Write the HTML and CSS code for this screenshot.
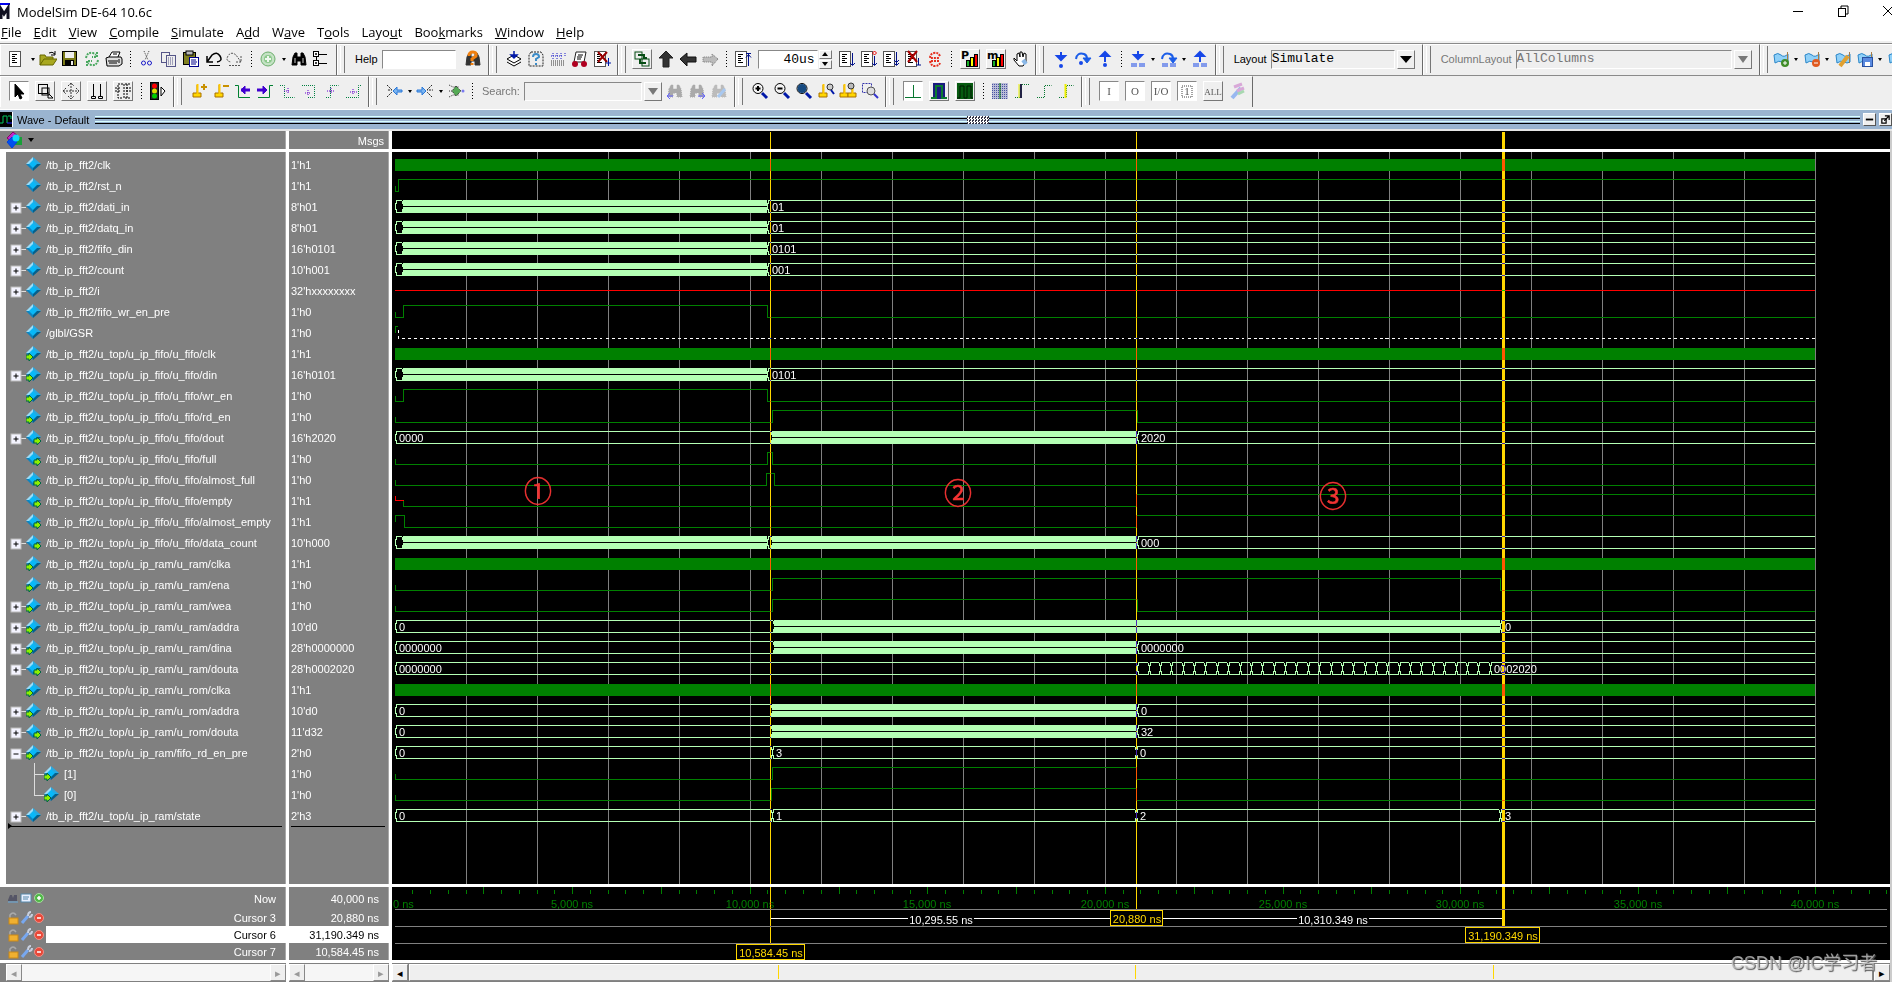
FILE: index.html
```html
<!DOCTYPE html>
<html lang="en">
<head>
<meta charset="utf-8">
<title>ModelSim DE-64 10.6c</title>
<link rel="stylesheet" href="styles.css">
</head>
<body>
<div class="app">
  <header class="titlebar">
    <span class="app-icon" data-icon="app"></span>
    <h1 class="app-title">ModelSim DE-64 10.6c</h1>
    <div class="window-buttons">
      <button aria-label="Minimize" data-icon="winmin"></button>
      <button aria-label="Restore" data-icon="winmax"></button>
      <button aria-label="Close" data-icon="winclose"></button>
    </div>
  </header>
  <nav class="menu">
    <button><u>F</u>ile</button><button><u>E</u>dit</button><button><u>V</u>iew</button><button><u>C</u>ompile</button><button><u>S</u>imulate</button><button>A<u>d</u>d</button><button>W<u>a</u>ve</button><button>T<u>o</u>ols</button><button>Layo<u>u</u>t</button><button>Boo<u>k</u>marks</button><button><u>W</u>indow</button><button><u>H</u>elp</button>
  </nav>

  <div class="toolbar-row">
    <div class="group first" data-tools="new > open save reload print | cut copy paste undo redo | add > find tree"></div>
    <div class="group">
      <label class="tool-label" for="help">Help</label>
      <input class="field help-field" id="help" type="text">
      <span class="tools" data-tools="helpfind"></span>
    </div>
    <div class="group" data-tools="compile compileall simulate break stopdoc"></div>
    <div class="group run-group">
      <span class="tools" data-tools="link* up left rightdim | restart"></span>
      <input class="field time-field" type="text" value="40us" aria-label="Run length">
      <span class="spinner"><button aria-label="Increase"><i class="tri-up"></i></button><button aria-label="Decrease"><i class="tri-down"></i></button></span>
      <span class="tools" data-tools="run runcont runall breakx stop | perf* mem* hand"></span>
    </div>
    <div class="group" data-tools="stepin stepover stepout | stepinl > stepoverl > stepoutl"></div>
    <div class="group layout-group">
      <label class="tool-label" for="layout">Layout</label>
      <select class="field combo layout-combo" id="layout"><option>Simulate</option></select>
      <button class="drop" aria-label="Open layouts"><i class="tri-big"></i></button>
    </div>
    <div class="group layout-group">
      <label class="tool-label dim" for="columns">ColumnLayout</label>
      <select class="field combo column-combo" id="columns" disabled><option>AllColumns</option></select>
      <button class="drop" aria-label="Open column layouts" disabled><i class="tri-big dim-tri"></i></button>
    </div>
    <div class="group last" data-tools="bmadd > bmdel > bmedit bmsave > bmgo"></div>
  </div>
  <div class="toolbar-row">
    <div class="group first modes" data-tools="pointer^ zoomsel* pan* twocur* edit* | traffic"></div>
    <div class="group" data-tools="curadd curdel prevedge nextedge fallprev fallnext riseprev risenext"></div>
    <div class="group search-group">
      <span class="tools" data-tools="expin > expout > expall |"></span>
      <label class="tool-label dim" for="search">Search:</label>
      <input class="field search-field" id="search" type="text" disabled>
      <button class="drop" aria-label="Search history" disabled><i class="tri-big dim-tri"></i></button>
      <span class="tools" data-tools="findprev findnext findopt"></span>
    </div>
    <div class="group" data-tools="zoomin zoomout zoomfull zoomcur zoomcurs zoomrange"></div>
    <div class="group modes" data-tools="wave1^ wave2* wave3* | grid edgea edgeb edgec"></div>
    <div class="group modes" data-tools="f1^ f2^ f3^ f4^ f5* brush"></div>
    <div class="filler"></div>
  </div>

  <div class="pane-title">
    <span class="pane-icon" data-icon="pane"></span>
    <h2>Wave - Default</h2>
    <span class="rails"></span><span class="grip-dots"></span><span class="rails"></span>
    <button class="pane-button" aria-label="Minimize pane" data-icon="pmin"></button>
    <button class="pane-button" aria-label="Undock pane" data-icon="pdock"></button>
  </div>

  <main class="panes">
    <section class="column names">
      <div class="head"><button class="head-tool" aria-label="Object filter"><span data-icon="shapes"></span><i class="tri-down"></i></button></div>
      <ul class="body name-list" id="names"></ul>
      <div class="foot cursors" id="cursor-names"></div>
      <div class="scroll"><button aria-label="Scroll left">◂</button><span class="track"></span><button aria-label="Scroll right">▸</button></div>
    </section>
    <section class="column values">
      <div class="head">Msgs</div>
      <ul class="body value-list" id="values"></ul>
      <div class="foot cursors" id="cursor-values"></div>
      <div class="scroll"><button aria-label="Scroll left">◂</button><span class="track"></span><button aria-label="Scroll right">▸</button></div>
    </section>
    <section class="column waves">
      <svg class="head plot" id="wave-head"></svg>
      <svg class="body plot" id="wave-body"></svg>
      <svg class="foot plot" id="wave-foot"></svg>
      <div class="scroll active"><button aria-label="Scroll left">◂</button><span class="thumb"><svg id="wave-marks"></svg></span><button aria-label="Scroll right">▸</button></div>
    </section>
  </main>
  <div class="watermark">CSDN @IC学习者</div>
</div>
<script src="app.js"></script>
</body>
</html>
```

FILE: styles.css
```css
* { box-sizing: border-box; }
body { margin: 0; background: #efefef; }
.app {
  position: relative;
  display: flex;
  flex-direction: column;
  height: 100vh;
  min-height: 960px;
  overflow: hidden;
  font: 13px/16px "Open Sans", "Noto Sans", sans-serif;
  color: #000;
}
button { font: inherit; padding: 0; border: 0; background: none; color: inherit; }
svg { display: block; }

.titlebar { display: flex; align-items: center; height: 23px; background: #fff; }
.app-icon { width: 10px; height: 18px; overflow: hidden; }
.app-title { margin: 0 0 0 7px; font-size: 13px; font-weight: 400; line-height: 22px; flex: 1; white-space: nowrap; }
.window-buttons { display: flex; width: 103px; overflow: hidden; gap: 27px; align-self: flex-start; }
.window-buttons button { flex: none; width: 18px; height: 20px; }

.menu { display: flex; gap: 12px; padding-left: 1px; height: 20px; background: #fff; border-bottom: 2px solid #efefef; }
.menu button { line-height: 19px; height: 19px; }

.toolbar-row { display: flex; height: 32px; border-top: 1px solid #8a8a8a; overflow: hidden; }
.group {
  position: relative;
  flex: none;
  display: flex;
  align-items: center;
  height: 31px;
  padding: 0 4px 2px 13px;
  border-right: 1px solid #6a6a6a;
  border-left: 1px solid #fff;
  border-top: 1px solid #fff;
  background: #efefef;
}
.group.first { padding-left: 5px; }
.group:not(.first)::before {
  content: "";
  position: absolute;
  left: 2px; top: 1px; bottom: 2px;
  width: 3px;
  border-left: 1px solid #fff;
  border-right: 1px solid #777;
}
.group.last, .filler { flex: 1 0 0; border-right: 0; overflow: hidden; }
.group.last { padding-left: 9px; }
.tools { display: flex; align-items: center; }
.tool { flex: none; width: 22px; height: 22px; display: grid; place-items: center; }
.tool.raised, .tool.pressed { width: 20px; height: 20px; margin: 0 3px; }
.tool.raised { border: 1px solid; border-color: #fff #777 #777 #fff; }
.tool.pressed { border: 1px solid; border-color: #888 #fff #fff #888; background: #fff; }
.sep { flex: none; width: 11px; height: 16px; background: repeating-linear-gradient(#000 0 1px, transparent 1px 3px) center / 1px 100% no-repeat; }
.more { flex: none; width: 9px; height: 20px; display: grid; place-items: center; }
.tool-label { font: 11px/16px "Liberation Sans", sans-serif; padding-left: 4px; margin-right: 4px; white-space: nowrap; }
.dim { color: #777; }
.field {
  height: 19px;
  margin: 0;
  padding: 0 2px;
  border: 1px solid;
  border-color: #888 #fff #fff #888;
  border-radius: 0;
  background: #fff;
  color: #000;
  font: 13px/16px "Liberation Mono", monospace;
  outline: 0;
}
.help-field { width: 74px; margin-right: 6px; }
.time-field { width: 60px; margin-left: 4px; text-align: right; }
.combo { appearance: none; padding: 0; background: #efefef; opacity: 1; }
.combo:disabled { color: #777; }
.layout-combo { width: 124px; }
.column-combo { width: 216px; }
.search-field { width: 118px; background: #efefef; }
.drop { width: 18px; height: 19px; margin: 0 2px; display: grid; place-items: center; border: 1px solid; border-color: #fff #777 #777 #fff; }
.layout-group { padding-right: 5px; }
.run-group { padding-left: 10px; padding-right: 4px; }
.spinner { display: flex; flex-direction: column; gap: 1px; width: 13px; margin: 0 4px 0 1px; }
.spinner button { height: 9px; display: grid; place-items: center; border: 1px solid; border-color: #fff #777 #777 #fff; }
.tri-up, .tri-down, .tri-big { width: 0; height: 0; border: 3px solid transparent; border-top-width: 0; border-bottom: 4px solid #000; }
.tri-down { border-top: 4px solid #000; border-bottom: 0; }
.more .tri-down { border-left-width: 2px; border-right-width: 2px; border-top-width: 3px; }
.tri-big { border: 6px solid transparent; border-top: 7px solid #000; border-bottom: 0; }
.dim-tri { border-width: 7px 5px 0; border-top-color: #777; }

.pane-title { display: flex; align-items: center; height: 22px; margin-top: 2px; background: #9ab4d0; border-top: 1px solid #fff; border-bottom: 2px solid #e6e6e6; }
.pane-title h2 { margin: 0 6px 0 4px; font: 11px/16px "Liberation Sans", sans-serif; white-space: nowrap; }
.pane-icon { width: 13px; height: 15px; overflow: hidden; }
.rails { flex: 1; height: 8px; border: solid #000; border-width: 0 0 1px; background: linear-gradient(#d8ffff 0 1px, transparent 1px 2px, #000 2px 3px, transparent 3px 5px, #d8ffff 5px 6px, transparent 6px); }
.grip-dots { width: 22px; height: 8px; background: repeating-conic-gradient(#fff 0 25%, #334 0 50%) 0 0 / 3px 3px; }
.pane-button { flex: none; width: 13px; height: 13px; margin-left: 3px; background: #efefef; border: 1px solid; border-color: #fff #555 #555 #fff; display: grid; place-items: center; }

.panes { flex: 1; display: grid; grid-template-columns: 289px 103px 1fr; min-height: 0; }
.column {
  display: grid;
  grid-template-rows: 21px 1fr 76px 19px;
  min-width: 0;
  min-height: 0;
  border-right: 3px solid #fff;
  background: #808080;
  font: 11px/21px "Liberation Sans", sans-serif;
  color: #fff;
}
.names, .values { box-shadow: inset -1px 0 #a8a8a8; }
.head { height: 21px; border-bottom: 3px solid #fff; line-height: 20px; }
.values .head { text-align: right; padding-right: 5px; }
.head-tool { display: flex; align-items: center; gap: 4px; height: 18px; padding-left: 6px; }
.body { margin: 0; padding: 2px 0 0; list-style: none; min-height: 0; overflow: hidden; border-bottom: 3px solid #fff; }
.name-list { border-left: 6px solid #fff; }
.name-row { display: flex; align-items: center; height: 21px; padding-left: 4px; }
.name-row.child { padding-left: 22px; }
.name-row svg { flex: none; }
.branch { width: 16px; height: 21px; }
.expander { display: block; width: 16px; height: 21px; }
.sig-name { padding: 1px 0 0 5px; white-space: nowrap; }
.value-row { height: 21px; padding-left: 2px; line-height: 22px; white-space: nowrap; }
.insert-line { position: relative; height: 1px; margin: 0 4px 0 2px; background: #000; }
.name-list .insert-line::before {
  content: "";
  position: absolute;
  left: 0; top: -3px;
  border: solid transparent;
  border-width: 3px 0 3px 4px;
  border-left-color: #000;
}
.foot { border-bottom: 3px solid #fff; overflow: hidden; }
.cursor-row { display: flex; align-items: center; height: 17px; line-height: 17px; }
.cursor-row:first-child { height: 22px; }
.cursor-tools { display: flex; flex: none; padding-left: 7px; width: 46px; }
.cursor-tools button { width: 13px; height: 16px; }
.cursor-text { flex: 1; padding: 1px 10px 0 0; line-height: 16px; text-align: right; white-space: nowrap; }
.cursor-row.selected .cursor-text { background: #fff; color: #000; }

.scroll { display: flex; height: 19px; padding-top: 1px; background: #808080; }
.names .scroll { padding-left: 6px; }
.scroll button { flex: none; width: 16px; height: 17px; background: #efefef; border: 1px solid; border-color: #fff #888 #888 #fff; color: #999; line-height: 14px; }
.scroll.active button { color: #000; }
.track { flex: 1; background: #f6f6f6; height: 17px; }
.thumb { flex: 1; height: 17px; margin: 0 1px; background: #efefef; border: 1px solid; border-color: #fff #888 #888 #fff; }
.thumb svg { width: 100%; height: 14px; }

.waves { border-right: 2px solid #ccc; background: #000; }
.plot { width: 100%; height: 100%; padding: 0; overflow: hidden; background: #000; shape-rendering: crispEdges; }
.plot text { font: 11px "Liberation Sans", sans-serif; fill: #fff; }
.plot .axis { fill: #008000; }
.plot .flag { fill: #ffd700; }
.plot .note { font: 28px "Noto Sans CJK SC", sans-serif; fill: #f33333; stroke: #f33333; stroke-width: 0.5px; }
.gridline { stroke: #808080; }
.sig { fill: none; stroke: #008000; }
.sig.unknown { stroke: #f00; }
.sig.hiz { stroke: #fff; stroke-dasharray: 3 3; }
.clock { fill: #008000; }
.bus { fill: none; stroke: #b4ffb4; }
.dense { fill: #b4ffb4; }
.cursor { fill: #ffd700; mix-blend-mode: difference; }

.watermark {
  position: absolute;
  right: 15px;
  bottom: 7px;
  font: 18px/24px "Liberation Sans", "Noto Sans CJK SC", sans-serif;
  color: rgba(200, 200, 200, 0.75);
  text-shadow: 1px 1px 1px #555;
}
```

FILE: app.js
```javascript
const P = (d, s = '#000', f = 'none', x = '') => `<path d="${d}" stroke="${s}" fill="${f}" ${x}/>`;
const R = (x, y, w, h, f, s = 'none') => `<rect x="${x}" y="${y}" width="${w}" height="${h}" fill="${f}" stroke="${s}"/>`;
const C = (x, y, r, f, s = 'none') => `<circle cx="${x}" cy="${y}" r="${r}" fill="${f}" stroke="${s}"/>`;
const DOT = 'stroke-dasharray="1 1"';
const W2 = 'stroke-width="2"';
const doc = x => R(1.5, 1.5, 11, 15, '#fff', '#555') + P('M4 4.5h5M4 6.5h3M4 8.5h5M4 10.5h3M4 12.5h5') + x;
const flag = P('M2 5q4-3 7 0t7-1v8q-3 2-6 0t-7 1z', '#2a86c8', '#8fd0f8') + P('M15.5 2v11', '#a67b45');
const binos = (c, x = '') => P('M3 7l2-4h2v4h4V3h2l2 4 1 8h-5v-4H7v4H2z', c, c, x);
const lens = x => C(7, 6.5, 5, '#f4f4f4', '#000') + P('M11 11l5 5', '#0018a8', 'none', 'stroke-width="3"') + x;
const base = (x, y = 0) => P(`M${x} 3v8h-4v4h8v-4h-4`, '#a87000', '#ffd700') + P(`M${x + .5} 2v10`, '#ffc800', 'none', W2);
const down = (y, h) => P(`M9 ${y}v${h}M5 ${y + h - 3}h8l-4 4z`, '#1747e8', '#1747e8', W2);
const upA = P('M9 12V5M5 6h8L9 2z', '#1747e8', '#1747e8', W2);
const over = P('M2 9q1-7 8-5q3 1 3 5', '#1b5de8', 'none', W2) + P('M9 8h8l-4 5z', '#1b5de8', '#1b5de8');
const bars = P('M3 13v4M5 13v4M13 13v4M15 13v4M7 13v4M11 13v4', '#1747e8');
const key = t => `<text x="9" y="13" font-family="Liberation Serif" font-size="11" text-anchor="middle" fill="#555">${t}</text>`;
const chart = t => `<text x="0" y="9" font-family="DejaVu Sans" font-size="11" font-weight="bold">${t}</text>` + R(5.5, 10.5, 3, 6, '#18b028', '#000') + R(9.5, 7.5, 3, 9, '#ff0', '#000') + R(13.5, 4.5, 3, 12, '#f00', '#000');
const icons = {
  app: R(0, 0, 10, 2, '#00e') + P('M1 16V6l3 5 4-6v11', '#112', 'none', 'stroke-width="3"'),
  winmin: P('M4 10.5h10'), winmax: R(4.5, 7.5, 7, 8, '#fff', '#000') + P('M7 7V5h7v8h-2'), winclose: P('M4 5l10 10M14 5L4 15'),
  new: doc(''),
  open: P('M1 15V5h5l1 2h7v2M1 15l4-6h13l-4 6z', '#660', '#a8a820') + P('M10 3q3-2 6 1M16 1v4h-4'),
  save: R(1.5, 1.5, 14, 14, '#7a7a18', '#000') + R(4, 2, 9, 6, '#eee') + R(4, 10, 9, 6, '#000') + R(10, 11, 2, 4, '#eee'),
  reload: P('M3 8q1-6 7-5l3 2M14 2v5H9M15 10q-1 6-7 5l-3-2M4 16v-5h5', '#4aa860', 'none', 'stroke-width="2" stroke-dasharray="2 1"'),
  print: P('M4 7l3-5h8l-2 5', '#000', '#fff') + P('M1 8l3-1h12l1 2v5l-3 2H2z', '#000', '#ddd') + P('M3 11h10M4 13h8M14 9v4M8 4h4'),
  cut: P('M6 1l4 9M11 1L7 10', '#444', 'none', DOT) + C(5.5, 13, 2, 'none', '#1818c8') + C(11.5, 13, 2, 'none', '#1818c8'),
  copy: R(1.5, 2.5, 8, 10, '#eee', '#558') + R(6.5, 5.5, 9, 11, '#eee', '#558') + P('M8 8h6M8 10h6M8 12h6M8 14h6', '#558', 'none', DOT),
  paste: R(1.5, 2.5, 12, 12, '#808020', '#000') + R(4, 1, 7, 4, '#bbb', '#000') + R(7.5, 7.5, 9, 9, '#fff', '#00008b') + P('M9 10h5M9 12h6M9 14h5', '#00008b'),
  undo: P('M3 6v6h6M3 12L8 5q5-4 8 1t-3 6', '#000', 'none', 'stroke-width="1.5"') + P('M5 15.5h11'),
  redo: P('M15 6v6H9M15 12L10 5Q5 1 2 6t3 6M3 15.5h11', '#555', 'none', 'stroke-dasharray="2 1"'),
  add: C(9, 9, 7, '#c4e2c4', '#6cae6c') + C(9, 9, 4, '#8cc88c') + P('M9 6v6M6 9h6', '#eef8ee', 'none', W2),
  find: binos('#000') + P('M5 8v5M13 8v5', '#ccc'),
  tree: R(1.5, 1.5, 5, 5, '#fff', '#000') + R(1.5, 10.5, 5, 5, '#fff', '#000') + P('M3 4h2M4 3v2M3 13h2M4 12v2M7 4.5h8M4.5 7v3M7 13.5h8'),
  helpfind: binos('#333') + P('M5 6q0-4 4-4t3 4l-4 3v2M8 13v2', '#f08010', 'none', 'stroke-width="3"'),
  compile: P('M2 9l7-4 7 4-7 4zM2 12l7 4 7-4', '#000', '#fff') + P('M9 1v6M6 5h6l-3 3z', '#0018a8', '#0018a8', 'stroke-width="1.5"'),
  compileall: P('M4 2h10l2 3v11H2V5z', '#222', '#eee', 'stroke-dasharray="2 1"') + P('M6 7q0-3 3-3t3 3l-3 2v2M9 13v2', '#3c8cc8', 'none', W2),
  simulate: P('M2 13h14M2 11h14M2 15h14', '#333', 'none', DOT) + P('M4 3v4M8 3v4M12 3v4M16 3v4M2 6h4M6 6h4M10 6h4M4 8v1M8 8v1M12 8v1', '#1818c8', 'none', DOT),
  break: P('M5 2h10l-2 10H3z', '#222', '#fff') + P('M7 5h5M6 7h5M6 9h4') + C(4, 14, 3, '#b00020') + C(13, 14, 3, '#b00020'),
  stopdoc: doc(P('M5 2l9 10M14 2L5 12', '#900', 'none', W2) + P('M15.5 8v8M13 13h5', '#0018a8')),
  link: R(2, 2, 7, 7, 'none', '#064d14') + R(9, 9, 7, 7, 'none', '#064d14') + P('M5 5h6v3h3M7 9v4h6', '#064d14', 'none', W2),
  up: P('M9 1l7 7h-4v9H6V8H2z', '#222', '#333'), left: P('M1 9l7-6v4h9v5H8v4z', '#111', '#333'),
  rightdim: P('M17 9l-6-5v3H2v5h9v4z', '#777', '#bbb', DOT),
  restart: doc(P('M14.5 3v13M12 3.5h5M12 7.500l2.500-3 2.500 3', '#00108b')),
  run: doc(P('M14.5 3v12M12 13l2.500 2.500 2.500-2.500', '#00108b')), runcont: doc(P('M14.5 6v9M12 13l2.500 2.500 2.500-2.500', '#00108b') + P('M14.500 1l2 2-2 2-2-2z', '#e00')),
  runall: doc(P('M14.5 2v13M12 10l2.500 2.500 2.500-2.500M12 13l2.500 2.500 2.500-2.500', '#00108b')), breakx: doc(P('M4 1l9 11M13 1L4 12', '#a00', 'none', W2) + P('M14.5 8v7M12 15h5', '#00108b')),
  stop: P('M14 6Q12 2 8 3T4 8h9M13 11H4q1 5 5 5t5-3', '#e53020', 'none', 'stroke-width="2" stroke-dasharray="2 1"'),
  perf: chart('P'), mem: chart('m'),
  hand: P('M3 8l3 3V4l2-1 1 4V2h2l1 5 1-4 2 1v8l-3 4H8l-5-6z', '#000', '#fff') + P('M12 10l3 4', '#8ab8e8', 'none', 'stroke-width="4"'),
  stepin: down(2, 7) + C(9, 16, 2, '#1747e8'), stepover: over + C(7, 13, 2, '#1747e8'), stepout: upA + C(9, 15, 2, '#1747e8'),
  stepinl: down(1, 7) + bars, stepoverl: over + bars, stepoutl: upA + bars,
  bmadd: flag + C(13, 13, 4, '#3f8c28') + P('M11 13h4M13 11v4', '#fff'), bmdel: flag + C(13, 13, 4, '#e05a20') + P('M11 13h4', '#fff'),
  bmedit: flag + P('M6 16L14 6', '#e0a030', 'none', 'stroke-width="4"'), bmsave: flag + R(6.5, 7.5, 10, 9, '#5a8ae0', '#2850a0') + R(9, 12, 5, 4, '#fff'), bmgo: flag,
  pointer: P('M5 2v13l3-3 2 5 2-1-2-4h4z', '#000', '#000'),
  zoomsel: R(2.500, 2.500, 9, 9, 'none', '#000') + R(6, 6, 7, 7, 'none', '#000') + P('M12 10v6h5M13 12l4 4'),
  pan: P('M9 1v16M1 9h16M6 4l3-3 3 3M6 14l3 3 3-3M4 6L1 9l3 3M14 6l3 3-3 3', '#333', 'none', 'stroke-dasharray="2 1"'),
  twocur: P('M5.500 2v12M12.500 2v12M3.500 14.500h4v2h-4zM10.500 14.500h4v2h-4z'), edit: P('M9 2H4v14h5M1 6h5M1 9h5M13 2v14M17 6h-6M17 9h-6M16 2h-6v14h6', '#000', 'none', 'stroke-dasharray="2 1"'),
  traffic: R(1.500, .5, 8, 17, '#222', '#000') + C(5.500, 4, 2.500, '#f00') + C(5.500, 9, 2.500, '#dd0') + C(5.500, 14, 2.500, '#0c0') + P('M12 5l4 4-4 5z', '#000', '#fff'),
  curadd: base(7) + P('M11 5h6M14 2v6', '#c89000', 'none', W2), curdel: base(7) + P('M11 4h6', '#c89000', 'none', W2),
  prevedge: P('M1 3.500h3.500v12H16', '#008030') + P('M7 8h9', '#4000d0', 'none', 'stroke-width="3"') + P('M7 8l4-4v8z', '#4000d0', '#4000d0'),
  nextedge: P('M17 3.500h-3.500v12H2', '#008030') + P('M1 8h8', '#4000d0', 'none', 'stroke-width="3"') + P('M11 8L7 4v8z', '#4000d0', '#4000d0'),
  fallprev: P('M2 3.500h4.500v12h10', '#008040', 'none', DOT) + P('M6 9h6M10 6v5', '#60c', 'none', DOT), fallnext: P('M2 3.500h12.500v12H8', '#008040', 'none', DOT) + P('M5 11h6M8 8v5', '#60c', 'none', DOT),
  riseprev: P('M4 15.500h4.500v-12h8', '#008040', 'none', DOT) + P('M5 9h7M9 6v5', '#60c', 'none', DOT), risenext: P('M2 15.500h12.500v-12h3', '#008040', 'none', DOT) + P('M6 10h7M9 7v5', '#60c', 'none', DOT),
  expin: P('M2 3l5 5H2M2 15l5-5', '#222', 'none', 'stroke-dasharray="2 1"') + P('M8 9l4-4v3h5v2h-5v3z', '#2a78d8', '#7ab4f0'),
  expout: P('M16 3l-5 5h6M16 15l-5-5', '#222', 'none', 'stroke-dasharray="2 1"') + P('M10 9L6 5v3H1v2h5v3z', '#2a78d8', '#7ab4f0'),
  expall: P('M2 3l4 2 6 0M2 15l4-2h6M2 9h3', '#333', 'none', DOT) + P('M9 4l5 5-5 5-4-5z', '#222', '#5a5', DOT) + C(16, 9, 1.500, '#7a7af0'),
  findprev: binos('#aaa', DOT) + P('M7 14H1l3-3M1 14l3 3', '#66f'), findnext: binos('#aaa', DOT) + P('M10 14h7l-3-3M17 14l-3 3', '#66f'),
  findopt: binos('#bbb', DOT) + P('M8 15l7-8', '#a8c8f0', 'none', 'stroke-width="3"'),
  zoomin: lens(P('M7 4v5M4.500 6.500h5', '#000', 'none', W2)), zoomout: lens(P('M4.500 6.500h5', '#000', 'none', W2)), zoomfull: lens(C(7, 6.500, 4.500, '#164a80')),
  zoomcur: base(6) + C(13, 5, 3, '#ccc', '#333') + P('M14 8l3 4', '#0018a8', 'none', W2), zoomcurs: base(5) + base(13) + C(12, 4, 3, '#bbb', '#333'),
  zoomrange: P('M1.500 1.500h9v9h-9z', '#33a', 'none', 'stroke-dasharray="2 1"') + C(10, 9, 4, '#ddd', '#555') + P('M13 12l4 4', '#33c', 'none', W2),
  wave1: P('M1 15.500h16M9.500 3v13', '#087830'), wave2: R(3, 1, 12, 16, '#1a1a80') + P('M1 16h5V4h6v12h5', '#0a7a30', 'none', W2),
  wave3: R(1, 1, 16, 16, '#065a10') + P('M1 16h3V4h4v12h3V4h4v12h2', '#001800'),
  grid: `${Array.from({ length: 8 }, (_, i) => P(`M1 ${2.5 + 2 * i}h16`, '#4450a0', 'none', DOT)).join('')}` + R(1, 1, 16, 16, '#5058a855') + P('M9 1v16', '#070'),
  edgea: P('M2 15.500h5V2.500h9', '#087830', 'none', DOT) + P('M8 2v14', '#224', 'none', W2) + P('M6 2v14', '#ee0'),
  edgeb: P('M2 15.500h7.500v-12h7', '#087830', 'none', DOT), edgec: P('M2 15.500h7.500v-12h7', '#087830', 'none', DOT) + P('M8.500 2v14', '#ee0', 'none', W2),
  f1: key('I'), f2: key('O'), f3: key('I/O'), f4: key('1') + P('M4 4h10v11H4z', '#444', 'none', DOT), f5: key('ALL').replace('"11"', '"9"'),
  brush: P('M4 16l9-10', '#98b8f0', 'none', 'stroke-width="4"') + P('M6 5l8-3M9 9l7-3', '#d8a8d8', 'none', 'stroke-width="3"') + P('M10 12l6-3', '#a8d8b0', 'none', 'stroke-width="3"'),
  pane: R(0, 0, 13, 15, '#000') + P('M0 11h3V4h4v7M8 4h3v3', '#00c860') + P('M7 11h5', '#22f') + P('M12.500 0v15', '#fff'),
  pmin: P('M3 9h12', '#000', 'none', 'stroke-width="3"'), pdock: P('M3 8h7v7H3z', '#000', '#fff', W2) + P('M8 3h7v7M15 3L7 11', '#000', 'none', W2),
  shapes: P('M1 7l6-6 5 4-6 6z', '#806', '#c028c8') + R(9, 6, 7, 8, '#18a038') + P('M6 6l5 5-5 6-5-6z', '#0040e0', '#0050f0') + C(10, 7, 3.500, '#10d8f8')
};
const svg = name => `<svg width="18" height="18" viewBox="0 0 18 18" aria-hidden="true">${icons[name]}</svg>`;

document.querySelectorAll('[data-icon]').forEach(el => { el.innerHTML = svg(el.dataset.icon); });
document.querySelectorAll('.pane-button svg').forEach(el => { el.setAttribute('width', 11); el.setAttribute('height', 11); });
document.querySelectorAll('[data-tools]').forEach(el => {
  el.innerHTML = el.dataset.tools.split(' ').map(t => {
    if (t === '|') return '<span class="sep"></span>';
    if (t === '>') return '<button class="more" aria-label="More"><i class="tri-down"></i></button>';
    const kind = t.endsWith('*') ? ' raised' : t.endsWith('^') ? ' pressed' : '';
    const name = t.replace(/[*^]/, '');
    return `<button class="tool${kind}" aria-label="${name}">${svg(name)}</button>`;
  }).join('');
});

const F = '/tb_ip_fft2/u_top/u_ip_fifo/u_fifo/', M = '/tb_ip_fft2/u_top/u_ip_ram/u_ram/', O = '/tb_ip_fft2/u_top/u_ip_ram/u_rom/';
const A = 240, B = 10500, D = 10640, E = 20910, G = 31120;
const clk = { clock: true };
const bit = (...edges) => ({ bit: edges });
const bus = (...parts) => ({ bus: parts });
const input = text => bus([0, ''], [A, '#'], [B, text, 10515]);
// name, value, arrow (i = in, o = out), expander, waveform
const rows = [
  ['/tb_ip_fft2/clk', "1'h1", '', '', clk],
  ['/tb_ip_fft2/rst_n', "1'h1", '', '', bit([0, 0], [90, 1])],
  ['/tb_ip_fft2/dati_in', "8'h01", '', '+', input('01')],
  ['/tb_ip_fft2/datq_in', "8'h01", '', '+', input('01')],
  ['/tb_ip_fft2/fifo_din', "16'h0101", '', '+', input('0101')],
  ['/tb_ip_fft2/count', "10'h001", '', '+', input('001')],
  ['/tb_ip_fft2/i', "32'hxxxxxxxx", '', '+', { unknown: true }],
  ['/tb_ip_fft2/fifo_wr_en_pre', "1'h0", '', '', bit([0, 0], [A, 1], [B, 0])],
  ['/glbl/GSR', "1'h0", '', '', { gsr: true }],
  [F + 'clk', "1'h1", 'i', '', clk],
  [F + 'din', "16'h0101", 'i', '+', input('0101')],
  [F + 'wr_en', "1'h0", 'i', '', bit([0, 0], [A, 1], [B, 0])],
  [F + 'rd_en', "1'h0", 'i', '', bit([0, 0], [D, 1], [E, 0])],
  [F + 'dout', "16'h2020", 'o', '+', bus([0, '0000'], [D, '#'], [E, '2020'])],
  [F + 'full', "1'h0", 'o', '', bit([0, 0], [B, 1], [D, 0])],
  [F + 'almost_full', "1'h0", 'o', '', bit([0, 0], [10460, 1], [10680, 0])],
  [F + 'empty', "1'h1", 'o', '', { bit: [[A, 0], [20880, 1]], x: true }],
  [F + 'almost_empty', "1'h1", 'o', '', bit([0, 1], [270, 0], [20880, 1])],
  [F + 'data_count', "10'h000", 'o', '+', bus([0, ''], [A, '#'], [B, ''], [D, '#'], [E, '000'])],
  [M + 'clka', "1'h1", 'i', '', clk],
  [M + 'ena', "1'h0", 'i', '', bit([0, 0], [D, 1], [G, 0])],
  [M + 'wea', "1'h0", 'i', '+', bit([0, 0], [D, 1], [E, 0])],
  [M + 'addra', "10'd0", 'i', '+', bus([0, '0'], [D + 30, '#'], [G, '0', 31140])],
  [M + 'dina', "28'h0000000", 'i', '+', bus([0, '0000000'], [D + 30, '#'], [E, '0000000'])],
  [M + 'douta', "28'h0002020", 'o', '+', bus([0, '0000000'], ...Array.from({ length: 31 }, (_, i) => [E + 320 * i, '']), [E + 31 * 320, '0002020'])],
  [O + 'clka', "1'h1", 'i', '', clk],
  [O + 'addra', "10'd0", 'i', '+', bus([0, '0'], [D, '#'], [E, '0'])],
  [O + 'douta', "11'd32", 'o', '+', bus([0, '0'], [D, '#'], [E, '32'])],
  ['/tb_ip_fft2/u_top/u_ip_ram/fifo_rd_en_pre', "2'h0", 'i', '-', bus([0, '0'], [D, '3'], [20880, '0'])],
  ['[1]', "1'h0", 'i', 'child', bit([0, 0], [D, 1], [20880, 0])],
  ['[0]', "1'h0", 'i', 'last', bit([0, 0], [10610, 1], [20880, 0])],
  ['/tb_ip_fft2/u_top/u_ip_ram/state', "2'h3", '', '+', bus([0, '0'], [D, '1'], [20880, '2'], [G, '3', 31140])]
];

const diamond = arrow => `<svg width="15" height="17" viewBox="0 0 15 17" aria-hidden="true"><path fill="#9adcf8" d="M7 1L0 8h7z"/><path fill="#28a8e0" d="M7 1l8 7H7z"/><path fill="#0c84c0" d="M0 8h7v7z"/><path fill="#04608c" d="M15 8H7v7z"/><path fill="#08b8f8" d="M7 4l4 4-4 4-4-4z"/>${
  arrow ? `<path transform="translate(${arrow === 'i' ? 0 : 8} 0)" fill="#8cf000" stroke="#064" stroke-width="1" d="M0 10h3V8l4 4-4 4v-2H0z"/>` : ''}</svg>`;
const expander = kind => `<svg width="16" height="21" viewBox="0 0 16 21"><path d="M11 11.500h5" stroke="#ddd"/><rect x="1" y="7" width="10" height="10" fill="#f4f4ff" stroke="#bbb"/><path d="M3.500 12h5${kind === '+' ? 'M6 9.500v5' : ''}" stroke="#000"/></svg>`;
const branch = last => `<svg class="branch" viewBox="0 0 16 21"><path d="M6.500 0v${last ? 11 : 21}M6 11.500h10" stroke="#ddd" fill="none" shape-rendering="crispEdges"/></svg>`;

document.getElementById('names').innerHTML = rows.map(([name, , arrow, kind]) => {
  const child = kind === 'child' || kind === 'last';
  const lead = child ? branch(kind === 'last') : kind ? `<button class="expander" aria-label="Toggle ${name}">${expander(kind)}</button>` : '<span class="branch"></span>';
  return `<li class="name-row${child ? ' child' : ''}">${lead}${diamond(arrow)}<span class="sig-name">${name}</span></li>`;
}).join('') + '<li class="insert-line"></li>';
document.getElementById('values').innerHTML = rows.map(r => `<li class="value-row">${r[1]}</li>`).join('') + '<li class="insert-line"></li>';

const small = {
  binos: '<path d="M1 10l2-5h2l1 3 1-3h3v6H1z" fill="#556"/><path d="M1 12h10" stroke="#6ad"/>',
  sheet: '<rect x="1" y="4" width="10" height="8" fill="#e8f0ff" stroke="#58a"/><path d="M3 7h6M3 9h5" stroke="#58a"/>',
  plus: '<circle cx="6" cy="8" r="4.500" fill="#50b848" stroke="#a8dca0"/><path d="M4 8h4M6 6v4" stroke="#fff" stroke-width="1.500"/>',
  lock: '<path d="M3 8V5q3-4 6 0" stroke="#aaa" fill="none" stroke-width="1.500"/><rect x="2" y="8" width="9" height="6" fill="#f0b030" stroke="#c88818"/>',
  wrench: '<path d="M2 13l6-7" stroke="#78a8f0" stroke-width="3"/><path d="M8 6q0-4 3-4M9 7q3 0 3-3" stroke="#c8d0e0" stroke-width="2" fill="none"/>',
  minus: '<circle cx="6" cy="8" r="4.500" fill="#e84838" stroke="#f09088"/><path d="M4 8h4" stroke="#fff" stroke-width="1.500"/>'
};
const cursors = [['Now', '40,000 ns'], ['Cursor 3', '20,880 ns'], ['Cursor 6', '31,190.349 ns'], ['Cursor 7', '10,584.45 ns']];
const selected = i => (i === 2 ? ' selected' : '');
document.getElementById('cursor-names').innerHTML = cursors.map((c, i) => `<div class="cursor-row${selected(i)}"><span class="cursor-tools">${
  (i ? ['lock', 'wrench', 'minus'] : ['binos', 'sheet', 'plus']).map(k => `<button aria-label="${k}"><svg width="13" height="16">${small[k]}</svg></button>`).join('')
}</span><span class="cursor-text">${c[0]}</span></div>`).join('');
document.getElementById('cursor-values').innerHTML = cursors.map((c, i) => `<div class="cursor-row${selected(i)}"><span class="cursor-text">${c[1]}</span></div>`).join('');

const ROW = 21, TOP = 2, END = 40000;
function draw() {
  const head = document.getElementById('wave-head'), body = document.getElementById('wave-body'), foot = document.getElementById('wave-foot');
  const width = body.parentElement.clientWidth, height = body.clientHeight;
  const X = t => Math.floor(3 + t * width / 42170);
  const xe = X(END);
  let out = '';
  for (let t = 2000; t <= END; t += 2000) out += `<path class="gridline" d="M${X(t) + .5} 0V${height}"/>`;
  rows.forEach((r, i) => {
    const w = r[4], y = TOP + i * ROW, hi = y + 4.5, mid = y + 10.5, lo = y + 16.5;
    if (w.clock) out += `<rect class="clock" x="3" y="${y + 5}" width="${xe - 3}" height="12"/>`;
    if (w.unknown) out += `<path class="sig unknown" d="M3 ${mid}H${xe}"/>`;
    if (w.gsr) out += `<path class="sig" d="M3.5 ${mid}V${hi}H6"/><path class="sig hiz" d="M6.5 ${mid - 3}V${lo}H${xe}"/>`;
    if (w.bit) {
      const start = X(w.bit[0][0]) + .5;
      let d = `M${start} ${mid}`;
      w.bit.forEach(([t, v]) => { d += `H${X(t) + .5}V${v ? hi : lo}`; });
      out += `<path class="sig" d="${d}H${xe}"/>`;
      if (w.x) out += `<path class="sig unknown" d="M3.5 ${mid - 5}V${mid}H${start}"/>`;
    }
    if (w.bus) w.bus.forEach(([t, v, labelAt], k) => {
      const closing = k + 1 < w.bus.length;
      const x = X(t), x2 = closing ? X(w.bus[k + 1][0]) : xe + 1;
      if (v === '#') {
        out += `<rect class="dense" x="${x}" y="${y + 4}" width="${x2 - x}" height="13"/><rect x="${x}" y="${y + 10}" width="${x2 - x}" height="1"/>`;
        return;
      }
      out += `<path class="bus" d="M${x2 - 1} ${hi}H${x + 1.5}v3h-1v6h1v3H${x2 - 1}${closing ? `M${x2 - .5} ${hi}v3h1v6h-1v3` : ''}"/>`;
      if (v) out += `<text x="${X(labelAt || t) + 4}" y="${y + 15}">${v}</text>`;
    });
  });
  const marks = [[10584.45, 1], [20880, 1], [31190.349, 3]];
  const line = (t, w, h, y = 0) => `<rect class="cursor" x="${X(t)}" y="${y}" width="${w}" height="${h}"/>`;
  out += marks.map(m => line(m[0], m[1], height)).join('');
  [['①', 4050, 350], ['②', 15860, 352], ['③', 26410, 355]].forEach(([c, t, y]) => { out += `<text class="note" x="${X(t)}" y="${y}" text-anchor="middle">${c}</text>`; });
  body.innerHTML = out;
  head.innerHTML = marks.map(m => line(m[0], m[1], 17, 1)).join('');

  let f = '';
  for (let t = 500; X(t) < width; t += 500) f += `<path class="sig" d="M${X(t) + .5} ${t % 2500 ? 3 : 0}V7"/>`;
  f += '<text class="axis" x="1" y="21">0 ns</text>';
  for (let t = 5000; t <= END; t += 5000) f += `<text class="axis" x="${X(t)}" y="21" text-anchor="middle">${t.toLocaleString('en-US')} ns</text>`;
  f += [22.5, 39.5, 56.5].map(y => `<path class="gridline" d="M3 ${y}H${width - 3}"/>`).join('');
  f += line(10584.45, 1, 57) + line(20880, 1, 23) + line(31190.349, 3, 40);
  [[X(10584.45) + 1, X(20880) - 26, '10,295.55 ns'], [X(20880) + 27, X(31190.349), '10,310.349 ns']].forEach(([a, b, text], i) => {
    const c = Math.round((a + b) / 2), half = i ? 36 : 33;
    f += `<path d="M${a} 31.5H${c - half}M${c + half} 31.5H${b}" stroke="#fff"/><text x="${c}" y="37" text-anchor="middle">${text}</text>`;
  });
  [[20880, 23, 53, '20,880 ns'], [31190.349, 40, 75, '31,190.349 ns'], [10584.45, 57, 69, '10,584.45 ns']].forEach(([t, y, w, text]) => {
    f += `<rect x="${X(t) - Math.floor(w / 2) + .5}" y="${y + .5}" width="${w - 1}" height="15" fill="#000" stroke="#ffd700"/><text class="flag" x="${X(t) + 1}" y="${y + 13}" text-anchor="middle">${text}</text>`;
  });
  foot.innerHTML = f;
  const bar = document.getElementById('wave-marks'), bw = bar.parentElement.clientWidth;
  bar.innerHTML = marks.map(m => `<rect x="${Math.round(m[0] * bw / 42100)}" y="0" width="1" height="14" fill="#ffd700"/>`).join('');
}
draw();
addEventListener('resize', draw);
```
